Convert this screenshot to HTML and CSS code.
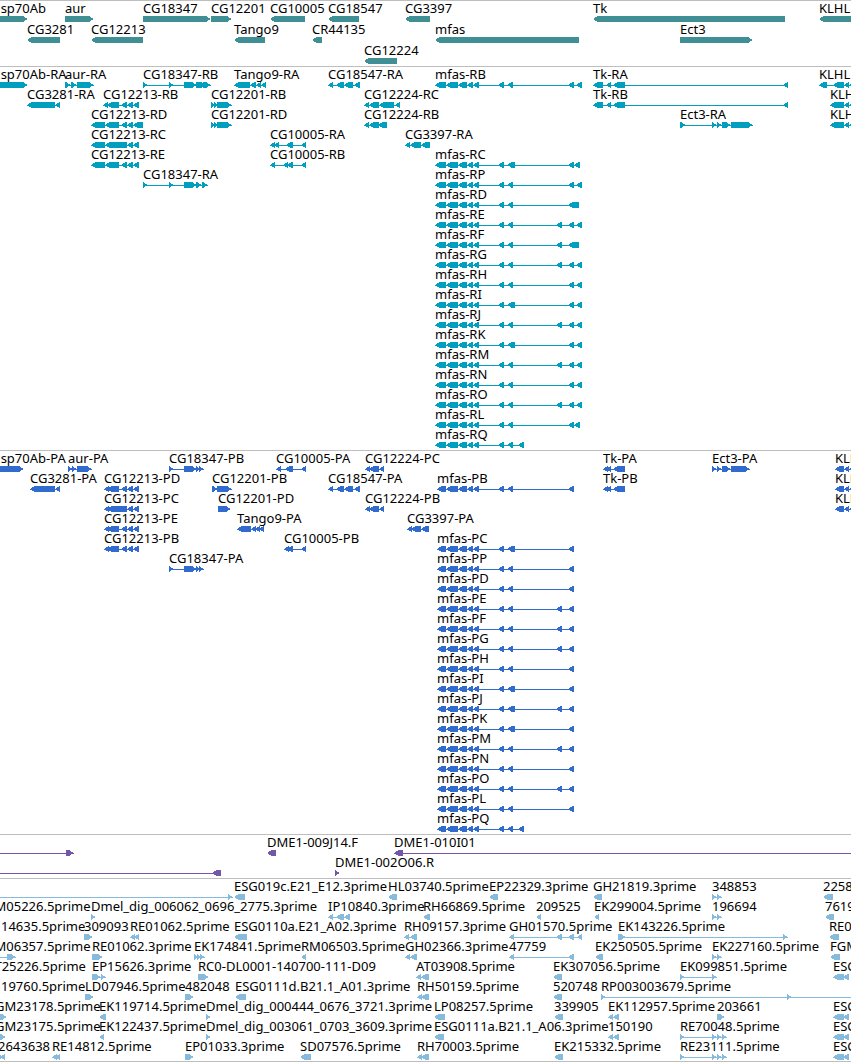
FILE: index.html
```html
<!DOCTYPE html>
<html lang="en">
<head>
    <meta charset="UTF-8">
    <meta name="viewport" content="width=device-width, initial-scale=1.0">
    <title>Genome Browser</title>
    <link rel="stylesheet" href="styles.css">
</head>
<body>
    <main class="browser">
        <section class="track genes" id="genes" aria-label="Genes"></section>
        <section class="track transcripts" id="transcripts" aria-label="Transcripts"></section>
        <section class="track proteins" id="proteins" aria-label="Coding regions"></section>
        <section class="track bacs" id="bacs" aria-label="BAC clones"></section>
        <section class="track ests" id="ests" aria-label="ESTs"></section>
    </main>
    <script src="tracks.js"></script>
</body>
</html>
```
FILE: styles.css
```css
body {
    margin: 0;
    background-color: #ffffff;
    color: #000000;
    font-family: "Noto Sans", "Open Sans", sans-serif;
    font-size: 13px;
}
.browser {
    overflow: hidden;
}
.track {
    border-top: 1px solid #bebebe;
    padding: 1px 0 2px;
}
.row {
    position: relative;
    height: 20px;
}

/* features sit on the row at their map position */
.feature {
    position: absolute;
    top: 0;
}
.label {
    display: block;
    height: 14px;
    line-height: 12px;
    white-space: nowrap;
}
.glyph {
    display: block;
    height: 6px;
    fill: currentColor;
    shape-rendering: crispEdges;
}

.genes {
    padding-bottom: 1px;
}
.genes .row {
    height: 21px;
}
.genes .glyph {
    color: #408f94;
}
.transcripts .glyph {
    color: #009fbf;
}
.proteins .glyph {
    color: #306bcd;
}
.bacs .glyph {
    color: #7458a8;
}
.ests {
    padding-bottom: 1px;
    border-bottom: 1px solid #bebebe;
}
.ests .glyph {
    color: #87bbde;
}
```
FILE: tracks.js
```js
// feature: [name, strand, [start, end, start, end, ...]]

var mfasR = [435, 446, 446, 458, 458, 467, 467, 473, 473, 479, 498, 504];
var mfasP = [437, 446, 446, 458, 458, 467, 467, 473, 473, 479, 498, 504];

function mfas(name, base, rest) {
    return [name, '-', base.concat(rest)];
}

var genes = [
    [
        ['Hsp70Ab', '+', [-9, 28]],
        ['aur', '+', [65, 94]],
        ['CG18347', '+', [143, 211]],
        ['CG12201', '+', [211, 232]],
        ['CG10005', '-', [270, 305]],
        ['CG18547', '-', [328, 359]],
        ['CG3397', '-', [405, 430]],
        ['Tk', '-', [593, 785]],
        ['KLHL18', '-', [819, 870]]
    ],
    [
        ['CG3281', '-', [27, 60]],
        ['CG12213', '-', [91, 143]],
        ['Tango9', '-', [234, 265]],
        ['CR44135', '-', [312, 322]],
        ['mfas', '-', [435, 579]],
        ['Ect3', '+', [680, 753]]
    ],
    [
        ['CG12224', '-', [364, 397]]
    ]
];

var transcripts = [
    [
        ['Hsp70Ab-RA', '+', [-9, 28]],
        ['aur-RA', '+', [65, 71, 71, 77, 77, 94]],
        ['CG18347-RB', '+', [143, 148, 169, 174, 184, 192, 188, 197, 196, 206, 203, 211]],
        ['Tango9-RA', '-', [234, 250, 250, 256, 256, 261, 261, 266]],
        ['CG18547-RA', '-', [328, 333, 336, 344, 344, 353, 354, 360]],
        mfas('mfas-RB', mfasR, [507, 513, 568, 574, 576, 582]),
        ['Tk-RA', '-', [593, 603, 606, 611, 613, 625, 783, 788]],
        ['KLHL18-RA', '-', [819, 827, 833, 844, 844, 849, 849, 870]]
    ],
    [
        ['CG3281-RA', '-', [27, 55, 55, 60]],
        ['CG12213-RB', '-', [103, 108, 107, 119, 121, 127, 127, 133, 133, 139]],
        ['CG12201-RB', '+', [211, 215, 214, 218, 217, 232]],
        ['CG12224-RC', '-', [364, 369, 369, 379, 379, 394, 395, 400]],
        ['Tk-RB', '-', [593, 603, 606, 611, 613, 625, 783, 788]],
        ['KLHL18-RB', '-', [830, 844, 844, 849, 849, 870]]
    ],
    [
        ['CG12213-RD', '-', [91, 105, 105, 119, 121, 127, 127, 133, 133, 143]],
        ['CG12201-RD', '+', [211, 215, 214, 218, 217, 232]],
        ['CG12224-RB', '-', [364, 369, 369, 379, 378, 387]],
        ['Ect3-RA', '+', [680, 686, 712, 717, 717, 722, 722, 731, 731, 753]],
        ['KLHL18-RC', '-', [830, 844, 844, 849, 849, 870]]
    ],
    [
        ['CG12213-RC', '-', [91, 105, 105, 127, 127, 133, 133, 139]],
        ['CG10005-RA', '-', [270, 275, 274, 279, 286, 293, 301, 306]],
        ['CG3397-RA', '-', [405, 410, 410, 421, 421, 430]]
    ],
    [
        ['CG12213-RE', '-', [91, 105, 105, 119, 121, 127, 127, 133, 133, 139]],
        ['CG10005-RB', '-', [270, 275, 283, 288, 287, 293, 301, 306]],
        mfas('mfas-RC', mfasR, [507, 515, 568, 574, 574, 580])
    ],
    [
        ['CG18347-RA', '+', [143, 148, 169, 174, 184, 192, 188, 197, 196, 202, 202, 208]],
        mfas('mfas-RP', mfasR, [507, 513, 568, 574, 576, 582])
    ],
    [mfas('mfas-RD', mfasR, [507, 513, 568, 579])],
    [mfas('mfas-RE', mfasR, [507, 513, 556, 562, 568, 574, 576, 582])],
    [mfas('mfas-RF', mfasR, [507, 513, 556, 562, 568, 579])],
    [mfas('mfas-RG', mfasR, [507, 513, 556, 562, 568, 574, 576, 582])],
    [mfas('mfas-RH', mfasR, [507, 513, 568, 574, 576, 582])],
    [mfas('mfas-RI', mfasR, [507, 515, 568, 574, 576, 582])],
    [mfas('mfas-RJ', mfasR, [507, 513, 556, 562, 568, 574, 576, 582])],
    [mfas('mfas-RK', mfasR, [507, 515, 568, 574, 576, 582])],
    [mfas('mfas-RM', mfasR, [507, 513, 556, 562, 568, 574, 576, 582])],
    [mfas('mfas-RN', mfasR, [507, 513, 568, 574, 576, 582])],
    [mfas('mfas-RO', mfasR, [507, 513, 556, 562, 568, 574, 576, 582])],
    [mfas('mfas-RL', mfasR, [507, 513, 568, 574, 574, 580])],
    [mfas('mfas-RQ', mfasR, [507, 513, 518, 524])]
];

var proteins = [
    [
        ['Hsp70Ab-PA', '+', [-9, 24]],
        ['aur-PA', '+', [68, 73, 72, 77, 77, 92]],
        ['CG18347-PB', '+', [169, 174, 184, 192, 188, 197, 196, 201, 199, 204]],
        ['CG10005-PA', '-', [276, 281, 285, 293, 301, 306]],
        ['CG12224-PC', '-', [365, 370, 369, 379, 379, 384]],
        ['Tk-PA', '-', [603, 608, 606, 611, 613, 625]],
        ['Ect3-PA', '+', [712, 717, 717, 722, 722, 731, 731, 750]],
        ['KLHL18-PA', '-', [835, 844, 844, 849, 849, 870]]
    ],
    [
        ['CG3281-PA', '-', [30, 55, 55, 60]],
        ['CG12213-PD', '-', [104, 109, 107, 119, 121, 127, 127, 133, 133, 139]],
        ['CG12201-PB', '+', [212, 218, 217, 232]],
        ['CG18547-PA', '-', [328, 333, 336, 344, 344, 353, 354, 360]],
        mfas('mfas-PB', mfasP, [507, 513, 568, 574]),
        ['Tk-PB', '-', [603, 608, 606, 611, 613, 625]],
        ['KLHL18-PB', '-', [835, 844, 844, 849, 849, 870]]
    ],
    [
        ['CG12213-PC', '-', [104, 109, 107, 127, 127, 133, 133, 139]],
        ['CG12201-PD', '+', [218, 231]],
        ['CG12224-PB', '-', [365, 370, 369, 379, 379, 384]],
        ['KLHL18-PC', '-', [835, 844, 844, 849, 849, 870]]
    ],
    [
        ['CG12213-PE', '-', [104, 109, 107, 119, 121, 127, 127, 133, 133, 139]],
        ['Tango9-PA', '-', [237, 251, 251, 256, 255, 260, 259, 264]],
        ['CG3397-PA', '-', [407, 412, 411, 421, 421, 429]]
    ],
    [
        ['CG12213-PB', '-', [104, 109, 107, 119, 121, 127, 127, 133, 133, 139]],
        ['CG10005-PB', '-', [284, 289, 287, 293, 301, 306]],
        mfas('mfas-PC', mfasP, [507, 515, 568, 574])
    ],
    [
        ['CG18347-PA', '+', [169, 174, 184, 192, 188, 197, 196, 201, 199, 204]],
        mfas('mfas-PP', mfasP, [507, 513, 568, 574])
    ],
    [mfas('mfas-PD', mfasP, [507, 513, 568, 574])],
    [mfas('mfas-PE', mfasP, [507, 513, 556, 562, 568, 574])],
    [mfas('mfas-PF', mfasP, [507, 513, 556, 562, 568, 574])],
    [mfas('mfas-PG', mfasP, [507, 513, 556, 562, 568, 574])],
    [mfas('mfas-PH', mfasP, [507, 513, 568, 574])],
    [mfas('mfas-PI', mfasP, [507, 515, 568, 574])],
    [mfas('mfas-PJ', mfasP, [507, 515, 556, 562, 568, 574])],
    [mfas('mfas-PK', mfasP, [507, 515, 568, 574])],
    [mfas('mfas-PM', mfasP, [507, 513, 556, 562, 568, 574])],
    [mfas('mfas-PN', mfasP, [507, 513, 568, 574])],
    [mfas('mfas-PO', mfasP, [507, 513, 556, 562, 568, 574])],
    [mfas('mfas-PL', mfasP, [507, 513, 568, 574])],
    [mfas('mfas-PQ', mfasP, [507, 513, 518, 524])]
];

var bacs = [
    [
        ['', '+', [-20, -12, 66, 74]],
        ['DME1-009J14.F', '-', [267, 276]],
        ['DME1-010I01', '-', [394, 403, 1890, 1900]]
    ],
    [
        ['', '-', [-20, -12, 212, 221]],
        ['DME1-002O06.R', '+', [335, 340]]
    ]
];

var ests = [
    [
        ['', '+', [-20, -12, 228, 233]],
        ['ESG019c.E21_E12.3prime', '-', [234, 245]],
        ['HL03740.5prime', '-', [388, 397]],
        ['EP22329.3prime', '-', [489, 498]],
        ['GH21819.3prime', '-', [593, 602]],
        ['348853', '+', [712, 717, 717, 722]],
        ['225814', '-', [823, 833]]
    ],
    [
        ['GM05226.5prime', '+', [-15, -6]],
        ['Dmel_dig_006062_0696_2775.3prime', '+', [91, 96]],
        ['IP10840.3prime', '-', [328, 333, 336, 344, 344, 350]],
        ['RH66869.5prime', '-', [423, 430]],
        ['209525', '-', [536, 541]],
        ['EK299004.5prime', '-', [594, 599]],
        ['196694', '+', [712, 717, 717, 722]],
        ['761903', '-', [825, 834]]
    ],
    [
        ['14635.5prime', '+', [1, 1]],
        ['309093', '+', [84, 93]],
        ['RE01062.5prime', '-', [130, 135, 134, 139]],
        ['ESG0110a.E21_A02.3prime', '-', [234, 247]],
        ['RH09157.3prime', '-', [404, 409, 410, 417]],
        ['GH01570.5prime', '-', [509, 514, 556, 562, 568, 574, 577, 582]],
        ['EK143226.5prime', '+', [618, 626, 783, 788]],
        ['RE08404.5prime', '-', [829, 839]]
    ],
    [
        ['GM06357.5prime', '+', [-15, -8, 7, 16]],
        ['RE01062.3prime', '+', [92, 103]],
        ['EK174841.5prime', '+', [194, 199, 197, 202, 200, 205]],
        ['RM06503.5prime', '-', [301, 306]],
        ['GH02366.3prime', '-', [405, 410, 410, 417]],
        ['47759', '-', [509, 514, 568, 574]],
        ['EK250505.5prime', '-', [595, 603]],
        ['EK227160.5prime', '+', [712, 717, 717, 722]],
        ['FGM0215.5prime', '-', [830, 840]]
    ],
    [
        ['AT25226.5prime', '+', [-13, 1]],
        ['EP15626.3prime', '+', [92, 101, 101, 106]],
        ['RC0-DL0001-140700-111-D09', '+', [198, 209]],
        ['AT03908.5prime', '-', [416, 421, 421, 429]],
        ['EK307056.5prime', '-', [553, 562]],
        ['EK099851.5prime', '+', [680, 685, 712, 717]],
        ['ESG01.5prime', '-', [833, 844, 843, 849]]
    ],
    [
        ['19760.5prime', '+', [1, 1]],
        ['LD07946.5prime', '+', [85, 94]],
        ['482048', '+', [185, 194]],
        ['ESG0111d.B21.1_A01.3prime', '-', [235, 246]],
        ['RH50159.5prime', '-', [417, 422, 421, 429]],
        ['520748', '-', [553, 562]],
        ['RP003003679.5prime', '+', [601, 606, 787, 792, 1890, 1900]]
    ],
    [
        ['GM23178.5prime', '+', [-5, 7]],
        ['EK119714.5prime', '-', [99, 106]],
        ['Dmel_dig_000444_0676_3721.3prime', '+', [206, 211]],
        ['LP08257.5prime', '-', [434, 445]],
        ['339905', '-', [554, 563]],
        ['EK112957.5prime', '-', [608, 613, 613, 619]],
        ['203661', '+', [717, 725]],
        ['ESG02.5prime', '-', [833, 844, 843, 849]]
    ],
    [
        ['GM23175.5prime', '+', [-5, 6]],
        ['EK122437.5prime', '-', [99, 104]],
        ['Dmel_dig_003061_0703_3609.3prime', '+', [206, 211]],
        ['ESG0111a.B21.1_A06.3prime', '-', [434, 444]],
        ['150190', '-', [608, 613, 613, 619]],
        ['RE70048.5prime', '+', [680, 685, 712, 717, 717, 722, 722, 727]],
        ['ESG03.5prime', '-', [833, 844, 843, 849]]
    ],
    [
        ['2643638', '-', [-2, 1, 0, 5]],
        ['RE14812.5prime', '-', [52, 57, 55, 60]],
        ['EP01033.3prime', '+', [185, 194]],
        ['SD07576.5prime', '-', [300, 311]],
        ['RH70003.5prime', '-', [417, 422, 421, 429]],
        ['EK215332.5prime', '-', [554, 563]],
        ['RE23111.5prime', '+', [680, 685, 712, 717, 717, 722, 722, 727]],
        ['ESG04.5prime', '-', [833, 844, 843, 849]]
    ]
];

// one exon: a block whose last 5px narrow to a point on the strand's side
// (both drawn clockwise, so overlapping exons stay filled)
function exonPath(start, end, strand) {
    var head = Math.min(5, end - start);
    if (strand === '-') {
        return 'M' + start + ' 3L' + (start + head) + ' 0H' + end + 'V6H' + (start + head) + 'Z';
    }
    return 'M' + start + ' 0H' + (end - head) + 'L' + end + ' 3L' + (end - head) + ' 6H' + start + 'Z';
}

function drawFeature(feature) {
    var exons = feature[2];
    var start = exons[0];
    var width = exons[exons.length - 1] - start;
    var path = '';
    if (exons.length > 2) {
        path += 'M0 3H' + width + 'V4H0Z';
    }
    for (var i = 0; i < exons.length; i += 2) {
        path += exonPath(exons[i] - start, exons[i + 1] - start, feature[1]);
    }
    return '<div class="feature" style="left: ' + start + 'px">' +
        '<span class="label">' + feature[0] + '</span>' +
        '<svg class="glyph" width="' + width + '" height="6" aria-hidden="true"><path d="' + path + '"/></svg>' +
        '</div>';
}

function drawTrack(id, rows) {
    document.getElementById(id).innerHTML = rows.map(function(row) {
        return '<div class="row">' + row.map(drawFeature).join('') + '</div>';
    }).join('');
}

drawTrack('genes', genes);
drawTrack('transcripts', transcripts);
drawTrack('proteins', proteins);
drawTrack('bacs', bacs);
drawTrack('ests', ests);
```
